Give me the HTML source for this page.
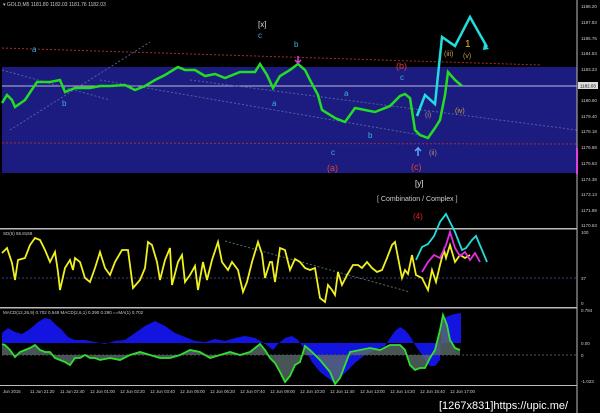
<!DOCTYPE html>
<html><head><style>
html,body{margin:0;padding:0;background:#000;width:600px;height:413px;overflow:hidden}
svg{display:block}
text{font-family:"Liberation Sans",sans-serif}
</style></head><body>
<svg width="600" height="413" viewBox="0 0 600 413" xmlns="http://www.w3.org/2000/svg">
<rect width="600" height="413" fill="#000"/>
<rect x="2" y="67" width="575" height="106" fill="#1c1c80"/>
<line x1="2" y1="86" x2="577" y2="86" stroke="#b8b8d8" stroke-width="1"/>
<line x1="2" y1="48" x2="540" y2="65" stroke="#a03030" stroke-dasharray="2,2"/>
<line x1="2" y1="143" x2="577" y2="144" stroke="#a03030" stroke-dasharray="2,2"/>
<line x1="10" y1="130" x2="150" y2="42" stroke="#5060a0" stroke-dasharray="2,2"/>
<line x1="2" y1="70" x2="110" y2="100" stroke="#5060a0" stroke-dasharray="2,2"/>
<line x1="100" y1="80" x2="420" y2="135" stroke="#5060a0" stroke-dasharray="2,2"/>
<line x1="190" y1="80" x2="577" y2="130" stroke="#5060a0" stroke-dasharray="2,2"/>
<text x="3" y="6" fill="#ccc" font-size="5">▾ GOLD,M5  1181.80 1182.03 1181.76 1182.03</text>
<polyline fill="none" stroke="#22dd22" stroke-width="2.5" points="2,103 7,95 12,100 15,107 25,100 37,82 50,82 60,80 65,92 75,88 90,88 100,86 110,86 125,85 135,90 145,86 155,80 165,75 178,67 185,70 195,70 205,76 215,74 225,78 240,72 255,72 260,64 267,75 273,88 280,76 290,70 298,64 305,70 310,80 318,95 322,110 335,118 345,122 355,108 365,110 375,112 390,106 400,96 405,94 410,98 415,130 420,135 428,138 435,128 440,120 445,95 448,72 455,80 462,86"/>
<polyline fill="none" stroke="#22dddd" stroke-width="2.5" points="417,116 425,95 435,104 442,37 455,46 470,17 487,47"/>
<path d="M484,44 l5,5 l-6,1z" fill="#22dddd"/>
<text x="258" y="27" fill="#ddd" font-size="8">[x]</text>
<text x="32" y="52" fill="#3cb0e0" font-size="8">a</text>
<text x="258" y="38" fill="#3cb0e0" font-size="8">c</text>
<text x="294" y="47" fill="#3cb0e0" font-size="8">b</text>
<text x="62" y="106" fill="#3cb0e0" font-size="8">b</text>
<text x="272" y="106" fill="#3cb0e0" font-size="8">a</text>
<text x="344" y="96" fill="#3cb0e0" font-size="8">a</text>
<text x="368" y="138" fill="#3cb0e0" font-size="8">b</text>
<text x="400" y="80" fill="#3cb0e0" font-size="8">c</text>
<text x="331" y="155" fill="#3cb0e0" font-size="8">c</text>
<text x="396" y="69" fill="#e04030" font-size="9">(b)</text>
<text x="327" y="171" fill="#e04030" font-size="9">(a)</text>
<text x="411" y="170" fill="#e04030" font-size="9">(c)</text>
<text x="465" y="47" fill="#e8c020" font-size="10">1</text>
<text x="463" y="58" fill="#c8a040" font-size="7">(v)</text>
<text x="444" y="56" fill="#c8a040" font-size="7">(iii)</text>
<text x="455" y="113" fill="#c8a040" font-size="7">(iv)</text>
<text x="425" y="117" fill="#b09070" font-size="7">(i)</text>
<text x="429" y="155" fill="#b09070" font-size="7">(ii)</text>
<text x="415" y="186" fill="#eee" font-size="8">[y]</text>
<text x="377" y="201" fill="#ccc" font-size="7">[ Combination / Complex ]</text>
<text x="413" y="219" fill="#e02020" font-size="8">(4)</text>
<path d="M418,156 v-8 l-3,3 M418,148 l3,3" stroke="#5aa8ff" stroke-width="1.5" fill="none"/>
<path d="M298,56 v7 l-3,-3 M298,63 l3,-3" stroke="#e040e0" stroke-width="1.5" fill="none"/>
<line x1="577" y1="0" x2="577" y2="413" stroke="#bbb"/>
<g fill="#ccc" font-size="4.5">
<text x="581" y="8">1188.20</text><text x="581" y="24">1187.83</text><text x="581" y="40">1185.76</text><text x="581" y="55">1184.53</text><text x="581" y="71">1183.23</text><text x="581" y="102">1180.60</text><text x="581" y="118">1179.40</text><text x="581" y="133">1178.18</text><text x="581" y="149">1176.88</text><text x="581" y="165">1175.63</text><text x="581" y="181">1174.38</text><text x="581" y="196">1173.13</text><text x="581" y="212">1171.88</text><text x="581" y="227">1170.63</text>
</g>
<rect x="578" y="82" width="20" height="7" fill="#ddd"/>
<text x="580" y="87.5" fill="#000" font-size="4.5">1182.03</text>
<rect x="576" y="148" width="2" height="26" fill="#e040e0"/>
<rect x="0" y="228" width="577" height="1.5" fill="#bbb"/>
<rect x="0" y="307" width="577" height="1.5" fill="#bbb"/>
<rect x="0" y="385" width="577" height="1" fill="#bbb"/>
<text x="3" y="235" fill="#ccc" font-size="4.5">SD(5) 55.8168</text>
<line x1="2" y1="278" x2="577" y2="278" stroke="#404080" stroke-dasharray="2,2"/>
<line x1="225" y1="241" x2="410" y2="292" stroke="#507070" stroke-dasharray="2,2"/>
<polyline fill="none" stroke="#f0f020" stroke-width="1.8" points="2,253 7,248 12,263 15,280 18,260 25,258 30,245 35,238 40,240 45,250 50,262 55,252 58,272 60,290 65,268 70,260 73,270 75,258 80,262 85,278 90,282 95,268 100,252 105,268 110,275 115,262 122,250 128,250 133,288 140,280 145,268 148,242 152,245 157,262 160,280 165,260 170,248 172,285 178,262 182,255 185,282 190,275 195,266 198,290 203,262 207,280 212,260 218,242 222,262 228,270 232,262 238,270 243,292 247,282 252,262 258,242 262,254 265,278 270,262 272,262 275,282 280,248 285,250 290,270 295,259 300,262 305,268 310,270 315,268 320,298 325,302 328,285 332,290 335,295 338,272 342,285 347,275 353,265 358,265 362,268 367,262 372,268 377,272 382,270 387,258 392,245 395,242 402,278 405,270 408,274 412,255 416,275 422,278 428,290 432,270 436,282 440,265 444,250 446,258 450,245 455,262 460,255 465,258 470,255"/>
<polyline fill="none" stroke="#e030e0" stroke-width="1.8" points="422,272 428,262 434,255 440,258 446,245 450,232 455,248 460,256 465,252 470,260 475,253 480,262"/>
<polyline fill="none" stroke="#22dddd" stroke-width="1.8" points="416,260 422,247 428,244 434,236 440,222 446,214 455,232 462,250 466,248 472,240 476,236 482,250 487,262"/>
<text x="581" y="234" fill="#ccc" font-size="4.5">100</text>
<text x="581" y="280" fill="#ccc" font-size="4.5">37</text>
<text x="581" y="305" fill="#ccc" font-size="4.5">0</text>
<text x="3" y="314" fill="#ccc" font-size="4.5">MACD(12,26,9) 0.702 0.548  MACD(2,6,1) 0.290 0.290  ==MA(1) 0.702</text>
<!-- MACD blue area -->
<path fill="#1414e0" d="M2,343 L2,333 8,328 15,332 22,334 30,329 38,322 45,318 50,319 55,324 62,330 68,337 75,340 85,340 95,342 105,344 115,341 125,340 135,333 145,326 155,321 165,326 175,333 185,337 195,341 205,342 215,339 225,341 235,338 245,336 255,338 262,342 268,346 273,350 278,344 285,338 292,336 298,340 305,350 312,362 320,372 328,378 333,382 340,378 348,370 356,362 365,355 375,350 385,346 390,338 395,331 400,327 405,330 410,336 415,345 420,352 425,360 430,366 435,366 440,360 442,320 448,316 455,314 461,313 461,343 Z"/>
<!-- histogram -->
<path fill="#5a6a6a" d="M2,355 L2,344 5,345 10,350 15,357 20,352 25,350 30,348 35,345 40,350 45,352 50,352 55,358 60,360 65,362 70,365 75,358 80,358 85,355 90,358 95,358 100,360 110,358 120,360 130,355 140,352 150,355 160,358 170,358 180,355 190,350 200,352 210,358 220,355 230,352 240,355 250,352 260,344 265,350 270,358 275,363 280,372 285,382 290,376 295,365 300,362 305,346 310,350 315,355 320,360 330,372 335,384 340,378 345,365 350,352 360,350 370,348 380,350 390,345 400,345 405,350 410,365 415,370 420,368 425,368 430,358 435,350 440,330 443,315 447,325 450,340 455,348 460,350 460,355 Z" opacity="0.8"/>
<line x1="2" y1="355" x2="577" y2="355" stroke="#555" stroke-dasharray="2,2"/>
<polyline fill="none" stroke="#30e030" stroke-width="1.8" points="2,344 5,345 10,350 15,357 20,352 25,350 30,348 35,345 40,350 45,352 50,352 55,358 60,360 65,362 70,365 75,358 80,358 85,355 90,358 95,358 100,360 110,358 120,360 130,355 140,352 150,355 160,358 170,358 180,355 190,350 200,352 210,358 220,355 230,352 240,355 250,352 260,344 265,350 270,358 275,363 280,372 285,382 290,376 295,365 300,362 305,346 310,350 315,355 320,360 330,372 335,384 340,378 345,365 350,352 360,350 370,348 380,350 390,345 400,345 405,350 410,365 415,370 420,368 425,368 430,358 435,350 440,330 443,315 447,325 450,340 455,348 460,350"/>
<text x="581" y="312" fill="#ccc" font-size="4.5">0.784</text>
<text x="581" y="345" fill="#ccc" font-size="4.5">0.00</text>
<text x="581" y="357" fill="#ccc" font-size="4.5">0</text>
<text x="581" y="383" fill="#ccc" font-size="4.5">-1.023</text>
<g fill="#ccc" font-size="4.3">
<text x="3" y="393">Jun 2015</text><text x="30" y="393">11 Jun 21:20</text><text x="60" y="393">11 Jun 22:40</text><text x="90" y="393">12 Jun 01:00</text><text x="120" y="393">12 Jun 02:20</text><text x="150" y="393">12 Jun 03:40</text><text x="180" y="393">12 Jun 05:00</text><text x="210" y="393">12 Jun 06:20</text><text x="240" y="393">12 Jun 07:40</text><text x="270" y="393">12 Jun 09:00</text><text x="300" y="393">12 Jun 10:20</text><text x="330" y="393">12 Jun 11:40</text><text x="360" y="393">12 Jun 13:00</text><text x="390" y="393">12 Jun 14:20</text><text x="420" y="393">12 Jun 15:40</text><text x="450" y="393">12 Jun 17:00</text>
</g>
<text x="439" y="409" fill="#fff" font-size="11" font-family="Liberation Mono, monospace">[1267x831]https://upic.me/</text>
</svg>
</body></html>
